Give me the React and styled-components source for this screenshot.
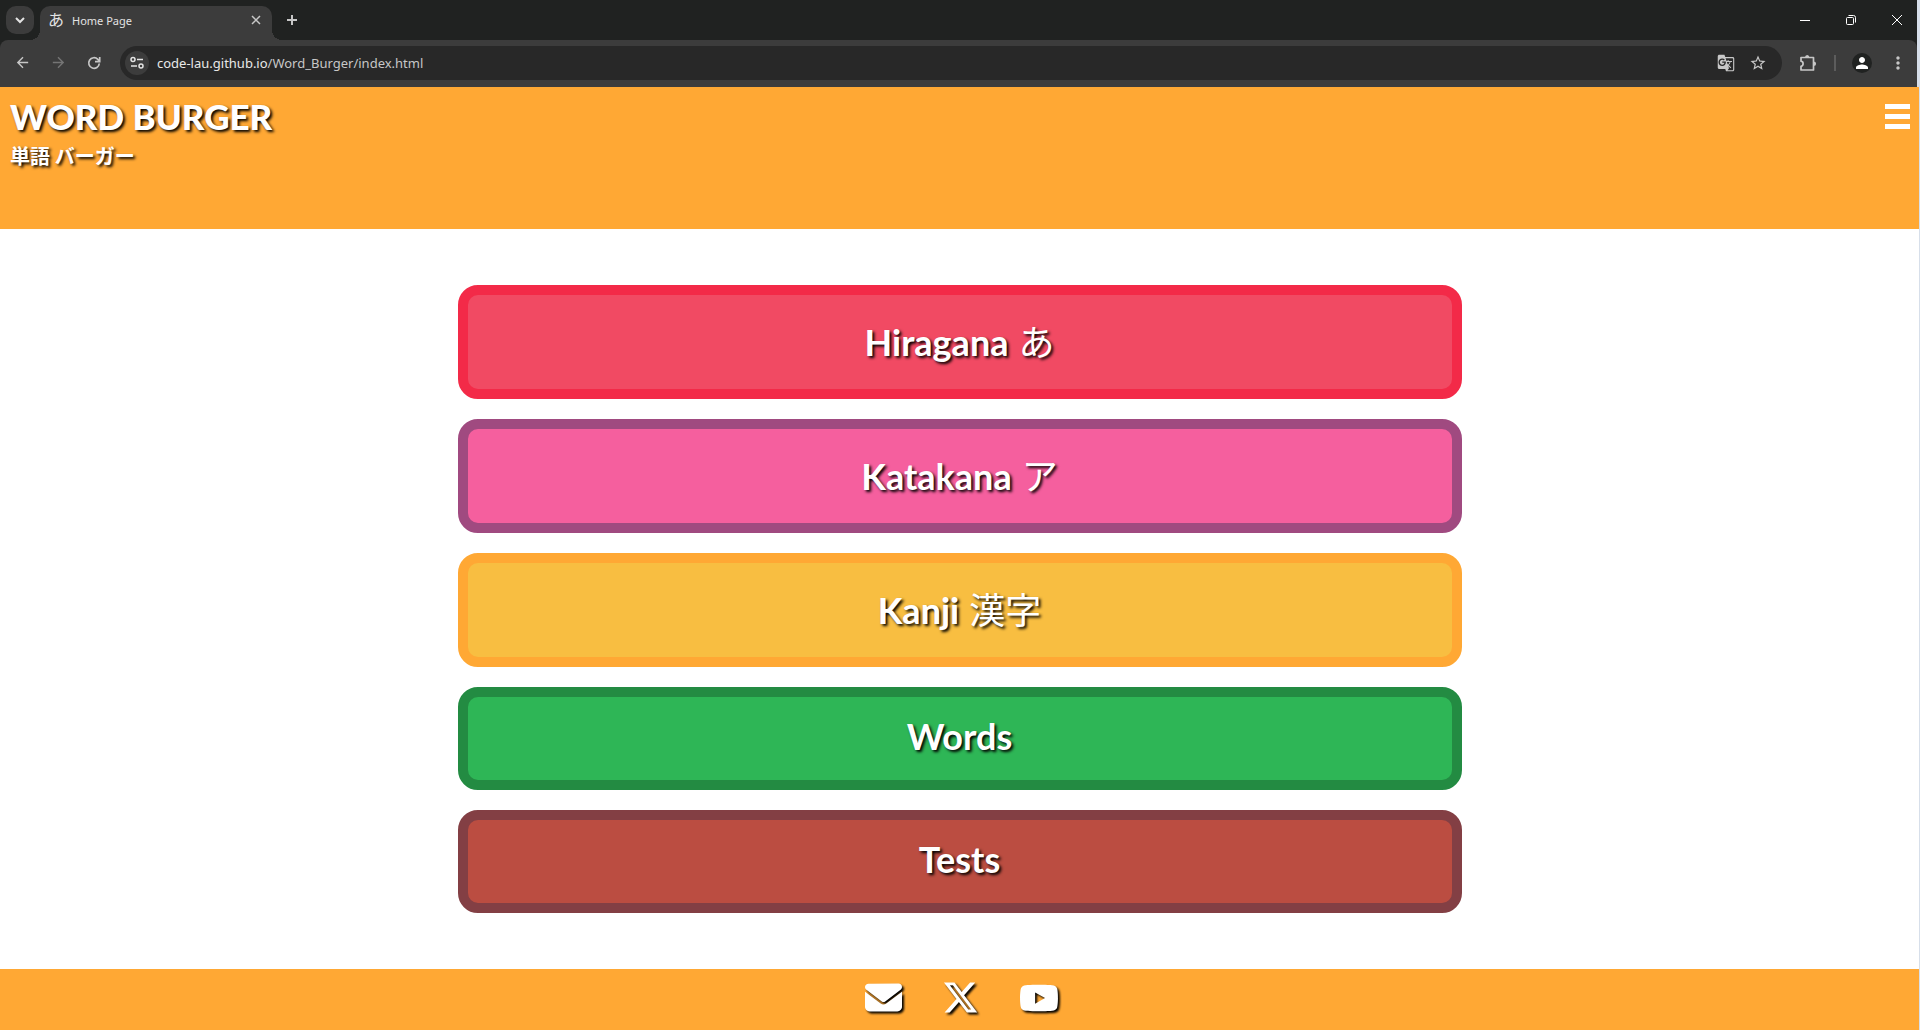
import React from "react";
import styled, { createGlobalStyle } from "styled-components";
import { FaEnvelope, FaXTwitter, FaYoutube } from "react-icons/fa6";
import { MdArrowBack, MdArrowForward, MdStarBorder, MdMoreVert, MdGTranslate, MdPerson } from "react-icons/md";

const uiFont = `"Noto Sans", "Noto Sans CJK JP", sans-serif`;
const siteFont = `"Lato", "Noto Sans CJK JP", sans-serif`;

const GlobalStyle = createGlobalStyle`
  *, *::before, *::after { box-sizing: border-box; }
  html, body, #root { height: 100%; }
  body { margin: 0; background: #ffffff; }
  h1, h2 { margin: 0; }
  button { border: 0; padding: 0; background: none; cursor: pointer; font: inherit; color: inherit; }
`;

const Desktop = styled.div`
  min-height: 100%;
  display: flex;
  padding-right: 1px;
  background: #d7dfea;
`;

const Window = styled.div`
  flex: 1;
  min-width: 0;
  display: flex;
  flex-direction: column;
  background: #ffffff;
`;

const Chrome = styled.div`
  border-right: 2px solid #d7dfea;
  background: #202221;
  color: #e3e3e3;
  font-family: ${uiFont};
`;

const TabStrip = styled.div`
  height: 40px;
  display: flex;
  align-items: center;
  padding-left: 6px;
`;

const TabSearch = styled.button`
  width: 28px;
  height: 28px;
  border-radius: 10px;
  background: #3c3c3c;
  display: grid;
  place-items: center;
`;

const Tab = styled.div`
  position: relative;
  align-self: flex-end;
  width: 232px;
  height: 34px;
  margin-left: 6px;
  padding: 0 10px 6px 8px;
  border-radius: 10px 10px 0 0;
  background: #3c3c3c;
  display: flex;
  align-items: center;
  gap: 8px;
  &::before, &::after {
    content: "";
    position: absolute;
    bottom: 0;
    width: 10px;
    height: 10px;
  }
  &::before { left: -10px; background: radial-gradient(circle at 0 0, transparent 10px, #3c3c3c 10px); }
  &::after { right: -10px; background: radial-gradient(circle at 100% 0, transparent 10px, #3c3c3c 10px); }
`;

const Favicon = styled.span`
  font-size: 16px;
  line-height: 16px;
`;

const TabTitle = styled.span`
  flex: 1;
  font-size: 11px;
`;

const IconButton = styled.button`
  width: ${(p) => p.$w || 20}px;
  height: ${(p) => p.$h || 20}px;
  display: grid;
  place-items: center;
  color: ${(p) => p.$color || "#c7c7c7"};
`;

const NewTab = styled(IconButton)`
  margin-left: 10px;
`;

const WindowButtons = styled.div`
  margin-left: auto;
  display: flex;
`;

const WindowButton = styled(IconButton)`
  width: 46px;
  height: 40px;
  color: #ffffff;
  &:last-child { width: 40px; margin-left: 3px; }
`;

const Toolbar = styled.div`
  height: 47px;
  display: flex;
  align-items: center;
  padding: 0 9px 2px 4px;
  border-radius: 8px 8px 0 0;
  background: #3c3c3c;
`;

const NavButtons = styled.div`
  display: flex;
  margin-right: 8px;
`;

const AddressBar = styled.div`
  flex: 1;
  height: 34px;
  display: flex;
  align-items: center;
  padding: 0 14px 0 5px;
  border-radius: 17px;
  background: #282828;
  gap: 8px;
`;

const SiteInfo = styled.button`
  width: 24px;
  height: 24px;
  border-radius: 50%;
  background: #3c3c3c;
  display: grid;
  place-items: center;
`;

const Url = styled.span`
  flex: 1;
  font-size: 13px;
  color: #c7c7c7;
  b { font-weight: 400; color: #e8e8e8; }
`;

const AddressActions = styled.div`
  display: flex;
  gap: 12px;
`;

const ToolbarActions = styled.div`
  display: flex;
  align-items: center;
  margin-left: 16px;
`;

const Divider = styled.span`
  width: 2px;
  height: 16px;
  margin: 0 16px;
  background: #5c5c5c;
`;

const Avatar = styled.button`
  width: 20px;
  height: 20px;
  border-radius: 50%;
  background: #202221;
  color: #ffffff;
  display: grid;
  place-items: center;
  margin-right: 16px;
`;

const Header = styled.header`
  height: 142px;
  display: flex;
  justify-content: space-between;
  align-items: flex-start;
  padding: 7px 9px 7px 10px;
  background: #ffa834;
  color: #ffffff;
  font-family: ${siteFont};
  text-shadow: 2px 2px 3px #000000;
`;

const Title = styled.h1`
  font-size: 35px;
  line-height: 44px;
  font-weight: 900;
`;

const Subtitle = styled.h2`
  font-size: 20px;
  line-height: 36px;
  font-weight: 700;
`;

const MenuButton = styled.button`
  width: 25px;
  margin-top: 10px;
  display: flex;
  flex-direction: column;
  gap: 5px;
  span { height: 5px; background: #ffffff; }
`;

const Main = styled.main`
  flex: 1;
  display: flex;
  flex-direction: column;
  align-items: center;
  gap: 20px;
  padding: 56px 20px;
`;

const Card = styled.a`
  width: 100%;
  max-width: 1004px;
  height: ${(p) => (p.$tall ? 114 : 103)}px;
  padding-bottom: ${(p) => (p.$tall ? 0 : 6)}px;
  display: flex;
  align-items: center;
  justify-content: center;
  gap: 10px;
  border: 10px solid ${(p) => p.$border};
  border-radius: 20px;
  background: ${(p) => p.$fill};
  color: #ffffff;
  font-family: ${siteFont};
  font-size: 36px;
  line-height: 44px;
  font-weight: 700;
  text-decoration: none;
  text-shadow: 2px 2px 3px #000000;
`;

const Kana = styled.span`
  font-weight: 400;
`;

const Footer = styled.footer`
  height: 61px;
  display: flex;
  justify-content: center;
  align-items: flex-start;
  gap: 40px;
  padding: 10px 0 0 4px;
  background: #ffa834;
`;

const SocialLink = styled.a`
  height: 37px;
  display: flex;
  align-items: center;
  color: #ffffff;
  filter: drop-shadow(2px 2px 1px #000000);
`;

const cards = [
  { label: "Hiragana", kana: "あ", border: "#f32a48", fill: "#f14a63" },
  { label: "Katakana", kana: "ア", border: "#a04a80", fill: "#f55f9e" },
  { label: "Kanji", kana: "漢字", border: "#ffa834", fill: "#f8be41" },
  { label: "Words", border: "#238b42", fill: "#2eb656" },
  { label: "Tests", border: "#833f44", fill: "#bb4d41" },
];

const Stroke = ({ size, d, width = 1 }) => (
  <svg width={size} height={size} viewBox={`0 0 ${size} ${size}`} fill="none" stroke="currentColor" strokeWidth={width} aria-hidden="true">
    <path d={d} />
  </svg>
);

export default function App() {
  return (
    <Desktop>
      <GlobalStyle />
      <Window>
        <Chrome>
          <TabStrip>
            <TabSearch aria-label="Search tabs"><Stroke size={10} width={2} d="M1 3l4 4 4-4" /></TabSearch>
            <Tab>
              <Favicon>あ</Favicon>
              <TabTitle>Home Page</TabTitle>
              <IconButton $w={12} aria-label="Close tab"><Stroke size={10} width={1.5} d="M1 1l8 8M9 1l-8 8" /></IconButton>
            </Tab>
            <NewTab aria-label="New tab"><Stroke size={10} width={2} d="M5 0v10M0 5h10" /></NewTab>
            <WindowButtons>
              <WindowButton aria-label="Minimize"><Stroke size={10} d="M0 5.5h10" /></WindowButton>
              <WindowButton aria-label="Restore">
                <Stroke size={10} d="M2 2.5h4.5a1 1 0 0 1 1 1V8.5a1 1 0 0 1-1 1H1.5a1 1 0 0 1-1-1V3.5a1 1 0 0 1 1-1zM2.5.5H7.5a2 2 0 0 1 2 2V7.5" />
              </WindowButton>
              <WindowButton aria-label="Close"><Stroke size={10} d="M0 0l10 10M10 0L0 10" /></WindowButton>
            </WindowButtons>
          </TabStrip>
          <Toolbar>
            <NavButtons>
              <IconButton $w={36} aria-label="Back"><MdArrowBack size={17} /></IconButton>
              <IconButton $w={36} $color="#757575" aria-label="Forward"><MdArrowForward size={17} /></IconButton>
              <IconButton $w={36} aria-label="Reload">
                <Stroke size={14} width={1.7} d="M12.3 7.5A5.3 5.3 0 1 1 10.8 3.3L12.5 5M12.7 1v4.6H8" />
              </IconButton>
            </NavButtons>
            <AddressBar>
              <SiteInfo aria-label="Site information">
                <svg width="14" height="14" viewBox="0 0 14 14" fill="none" stroke="currentColor" strokeWidth="1.5" aria-hidden="true">
                  <circle cx="3" cy="3.5" r="2" />
                  <circle cx="11" cy="10" r="2" />
                  <path d="M7 3.5h6M1 10h6" />
                </svg>
              </SiteInfo>
              <Url><b>code-lau.github.io</b>/Word_Burger/index.html</Url>
              <AddressActions>
                <IconButton aria-label="Translate"><MdGTranslate size={18} /></IconButton>
                <IconButton aria-label="Bookmark"><MdStarBorder size={18} /></IconButton>
              </AddressActions>
            </AddressBar>
            <ToolbarActions>
              <IconButton aria-label="Extensions">
                <svg width="18" height="18" viewBox="0 0 18 18" fill="none" stroke="currentColor" strokeWidth="1.7" strokeLinejoin="round" aria-hidden="true">
                  <path d="M2 3.5h12.5v12.500H2v-3.700a2.600 2.600 0 0 0 0-5.100z" />
                  <path d="M6 3.500a2.200 2.600 0 0 1 4.400 0zM14.500 7.500a2.600 2.200 0 0 1 0 4.400z" fill="currentColor" stroke="none" />
                </svg>
              </IconButton>
              <Divider />
              <Avatar aria-label="Profile"><MdPerson size={18} /></Avatar>
              <IconButton aria-label="Menu"><MdMoreVert size={20} /></IconButton>
            </ToolbarActions>
          </Toolbar>
        </Chrome>
        <Header>
          <div>
            <Title>WORD BURGER</Title>
            <Subtitle>単語 バーガー</Subtitle>
          </div>
          <MenuButton aria-label="Open menu"><span /><span /><span /></MenuButton>
        </Header>
        <Main>
          {cards.map((c) => (
            <Card key={c.label} href={`#${c.label}`} $tall={!!c.kana} $border={c.border} $fill={c.fill}>
              <span>{c.label}</span>
              {c.kana && <Kana>{c.kana}</Kana>}
            </Card>
          ))}
        </Main>
        <Footer>
          <SocialLink href="#mail" aria-label="Mail"><FaEnvelope size={37} /></SocialLink>
          <SocialLink href="#x" aria-label="X"><FaXTwitter size={37} /></SocialLink>
          <SocialLink href="#youtube" aria-label="YouTube"><FaYoutube size={40} /></SocialLink>
        </Footer>
      </Window>
    </Desktop>
  );
}
